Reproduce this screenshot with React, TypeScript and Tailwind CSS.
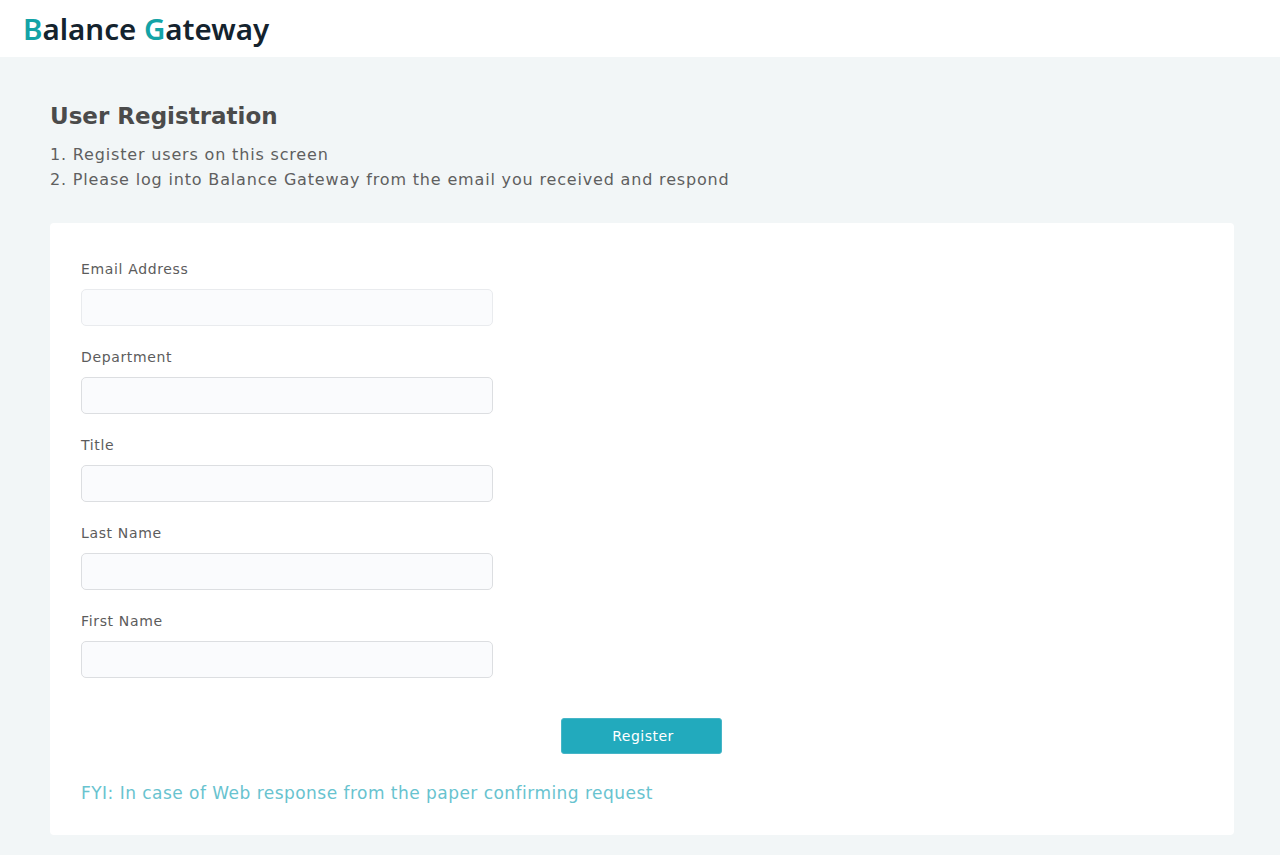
const FIELDS = ['Email Address', 'Department', 'Title', 'Last Name', 'First Name'];

export default function App() {
  return (
    <div className="min-h-[855px] bg-[#f2f6f7] font-['DejaVu_Sans',sans-serif]">
      {/* Header */}
      <header className="flex h-[57px] items-center bg-white pl-[23px]">
        <div className="font-['Noto_Sans',sans-serif] text-[29.5px] leading-none font-semibold text-[#14232e]">
          <span className="text-[#13a3a6]">B</span>alance <span className="text-[#13a3a6]">G</span>ateway
        </div>
      </header>

      <main className="pt-[44px] pr-[46px] pl-[50px]">
        {/* Page heading */}
        <h1 className="text-[23px] leading-[30px] font-bold text-[#4b4b4b]">User Registration</h1>
        <div className="mt-[11px] text-[16px] leading-[25px] tracking-[0.83px] text-[#5f5f5f]">
          <p>1. Register users on this screen</p>
          <p>2. Please log into Balance Gateway from the email you received and respond</p>
        </div>

        {/* Form card */}
        <div className="mt-[31px] h-[612px] rounded-[4px] bg-white pt-[36px] pr-[32px] pl-[31px]">
          <div className="flex flex-col gap-[21px]">
            {FIELDS.map((label, i) => (
              <label key={label} className="block w-[412px]">
                <span className="block text-[14px] leading-[20px] tracking-[0.65px] text-[#5c5c5c]">{label}</span>
                <input
                  type="text"
                  className={
                    i === 0
                      ? 'mt-[10px] block h-[37px] w-full rounded-[5px] border border-[#e9ebee] bg-[#fafbfd]'
                      : 'mt-[10px] block h-[37px] w-full rounded-[5px] border border-[#dcdee1] bg-[#fafbfd]'
                  }
                />
              </label>
            ))}
          </div>
          <div className="mt-[40px] flex justify-center">
            <button className="h-[36px] w-[161px] rounded-[3px] border border-[#46b5c7] bg-[#22aabd] pl-[3px] text-[14px] tracking-[0.5px] text-white">
              Register
            </button>
          </div>
          <p className="mt-[27px] text-[17px] leading-[24px] tracking-[0.47px] text-[#68c3cf]">
            FYI: In case of Web response from the paper confirming request
          </p>
        </div>
      </main>
    </div>
  );
}
